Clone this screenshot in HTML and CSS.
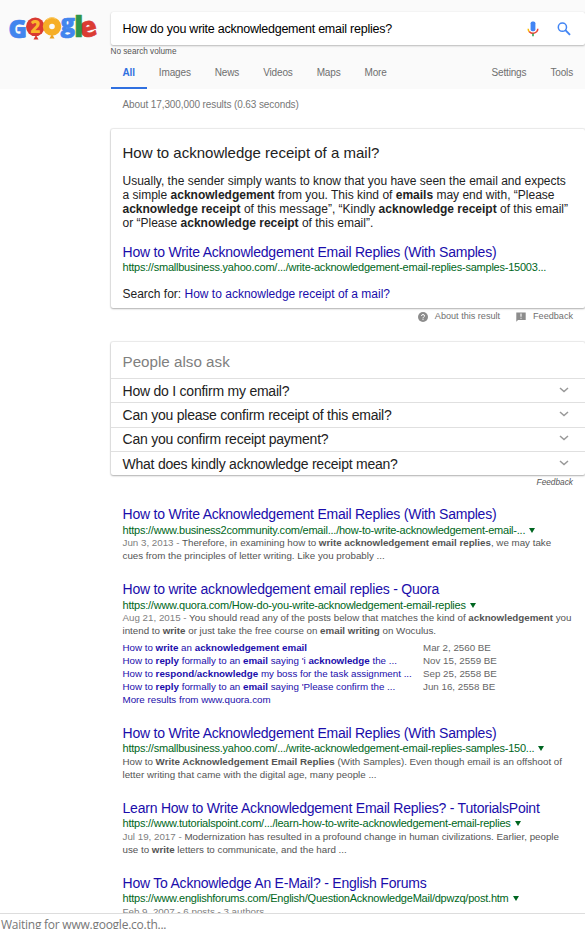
FILE: index.html
```html
<!DOCTYPE html>
<html lang="en">
<head>
    <meta charset="UTF-8">
    <meta name="viewport" content="width=device-width, initial-scale=1.0">
    <title>How do you write acknowledgement email replies? - Google Search</title>
    <link rel="stylesheet" href="styles.css">
</head>
<body>
    <div class="page">
        <header class="header">
            <a class="logo" href="#">
                <svg width="94" height="34" viewBox="0 -4 94 34" role="img" aria-label="Google">
                    <text class="letter blue" x="0.5" y="22.5" font-size="25">G</text>
                    <path d="M28 20l-2.5 4.5h5z" fill="#d93a31"/>
                    <circle cx="27.3" cy="11.8" r="9.3" fill="#d93a31"/>
                    <path d="M44 19l-2.5 4.5h5z" fill="#eca01c"/>
                    <circle cx="44" cy="11.5" r="6" fill="none" stroke="#f6ae26" stroke-width="6.4"/>
                    <path d="M39 4.5q5-3.5 9 -.5" fill="none" stroke="#fbd070" stroke-width="1"/>
                    <text class="digit" x="22.4" y="18" font-size="17">2</text>
                    <text class="letter blue" x="52.5" y="16.5" font-size="24">g</text>
                    <text class="letter red" x="72" y="22" font-size="28" transform="rotate(-15 80 15)">e</text>
                    <text class="letter green" x="66.3" y="22.3" font-size="28">l</text>
                </svg>
            </a>
            <div class="header-main">
                <div class="search-box">
                    <span class="query">How do you write acknowledgement email replies?</span>
                    <svg class="mic" width="12" height="16" viewBox="0 0 12 16">
                        <rect x="3.6" y="0.4" width="4.8" height="9.8" rx="1.8" fill="#4285f4"/>
                        <path d="M1.2 7.8q0 1.8 1.1 3" fill="none" stroke="#fbbc05" stroke-width="1.5"/>
                        <path d="M2.2 10.6Q6 14 9.6 10.8Q10.8 9.6 10.8 7.8" fill="none" stroke="#ea4335" stroke-width="1.5"/>
                        <path d="M6 12.6v2.6" stroke="#34a853" stroke-width="1.6"/>
                    </svg>
                    <svg class="lens" width="14" height="14" viewBox="0 0 14 14" fill="none" stroke="#4285f4">
                        <circle cx="5.4" cy="5.2" r="4.1" stroke-width="1.5"/>
                        <path d="M8.4 8.2L13 12.8" stroke-width="1.9"/>
                    </svg>
                </div>
                <div class="volume">No search volume</div>
                <nav class="tabs">
                    <a class="tab active" href="#">All</a>
                    <a class="tab" href="#">Images</a>
                    <a class="tab" href="#">News</a>
                    <a class="tab" href="#">Videos</a>
                    <a class="tab" href="#">Maps</a>
                    <a class="tab more" href="#">More</a>
                    <a class="tab" href="#">Settings</a>
                    <a class="tab" href="#">Tools</a>
                </nav>
            </div>
        </header>

        <main class="content">
            <div class="stats">About 17,300,000 results (0.63 seconds)</div>

            <section class="answer">
                <h2>How to acknowledge receipt of a mail?</h2>
                <p>Usually, the sender simply wants to know that you have seen the email and expects<br>
                a simple <b>acknowledgement</b> from you. This kind of <b>emails</b> may end with, “Please<br>
                <b>acknowledge receipt</b> of this message”, “Kindly <b>acknowledge receipt</b> of this email”<br>
                or “Please <b>acknowledge receipt</b> of this email”.</p>
                <a class="title" href="#">How to Write Acknowledgement Email Replies (With Samples)</a>
                <cite>https://smallbusiness.yahoo.com/.../write-acknowledgement-email-replies-samples-15003...</cite>
                <div class="search-for">Search for: <a href="#">How to acknowledge receipt of a mail?</a></div>
            </section>
            <div class="answer-footer">
                <svg width="10" height="10" viewBox="0 0 10 10">
                    <circle cx="5" cy="5" r="5" fill="#8c8c8c"/>
                    <path d="M3.5 4Q3.5 2.5 5 2.5T6.5 4Q6.5 4.6 5.7 5.1T5 6.4M5 7.1v1" fill="none" stroke="#fff" stroke-width="1"/>
                </svg>
                <span class="about">About this result</span>
                <svg width="10" height="10" viewBox="0 0 10 10">
                    <path d="M.3 .5h9.4v7.5H2L.3 9.7z" fill="#8c8c8c"/>
                    <path d="M5 1.6v3.2M5 5.7v1.1" stroke="#fff" stroke-width="1.1"/>
                </svg>
                <span class="about">Feedback</span>
            </div>

            <section class="ask">
                <h3>People also ask</h3>
                <div class="question">
                    <span>How do I confirm my email?</span>
                    <svg width="10" height="6" viewBox="0 0 10 6"><path d="M1 1l4 3.6L9 1"/></svg>
                </div>
                <div class="question">
                    <span>Can you please confirm receipt of this email?</span>
                    <svg width="10" height="6" viewBox="0 0 10 6"><path d="M1 1l4 3.6L9 1"/></svg>
                </div>
                <div class="question">
                    <span>Can you confirm receipt payment?</span>
                    <svg width="10" height="6" viewBox="0 0 10 6"><path d="M1 1l4 3.6L9 1"/></svg>
                </div>
                <div class="question">
                    <span>What does kindly acknowledge receipt mean?</span>
                    <svg width="10" height="6" viewBox="0 0 10 6"><path d="M1 1l4 3.6L9 1"/></svg>
                </div>
            </section>
            <div class="ask-feedback">Feedback</div>

            <div class="results">
                <article class="result">
                    <a class="title" href="#">How to Write Acknowledgement Email Replies (With Samples)</a>
                    <cite>https://www.business2community.com/email.../how-to-write-acknowledgement-email-...<i class="arrow"></i></cite>
                    <p><span class="date">Jun 3, 2013 - </span>Therefore, in examining how to <b>write acknowledgement email replies</b>, we may take<br>
                    cues from the principles of letter writing. Like you probably ...</p>
                </article>

                <article class="result">
                    <a class="title" href="#">How to write acknowledgement email replies - Quora</a>
                    <cite>https://www.quora.com/How-do-you-write-acknowledgement-email-replies<i class="arrow"></i></cite>
                    <p><span class="date">Aug 21, 2015 - </span>You should read any of the posts below that matches the kind of <b>acknowledgement</b> you<br>
                    intend to <b>write</b> or just take the free course on <b>email writing</b> on Woculus.</p>
                    <div class="sublinks">
                        <a href="#">How to <b>write</b> an <b>acknowledgement email</b></a><span>Mar 2, 2560 BE</span>
                        <a href="#">How to <b>reply</b> formally to an <b>email</b> saying 'i <b>acknowledge</b> the ...</a><span>Nov 15, 2559 BE</span>
                        <a href="#">How to <b>respond</b>/<b>acknowledge</b> my boss for the task assignment ...</a><span>Sep 25, 2558 BE</span>
                        <a href="#">How to <b>reply</b> formally to an <b>email</b> saying 'Please confirm the ...</a><span>Jun 16, 2558 BE</span>
                        <a href="#">More results from www.quora.com</a>
                    </div>
                </article>

                <article class="result">
                    <a class="title" href="#">How to Write Acknowledgement Email Replies (With Samples)</a>
                    <cite>https://smallbusiness.yahoo.com/.../write-acknowledgement-email-replies-samples-150...<i class="arrow"></i></cite>
                    <p>How to <b>Write Acknowledgement Email Replies</b> (With Samples). Even though email is an offshoot of<br>
                    letter writing that came with the digital age, many people ...</p>
                </article>

                <article class="result">
                    <a class="title" href="#">Learn How to Write Acknowledgement Email Replies? - TutorialsPoint</a>
                    <cite>https://www.tutorialspoint.com/.../learn-how-to-write-acknowledgement-email-replies<i class="arrow"></i></cite>
                    <p><span class="date">Jul 19, 2017 - </span>Modernization has resulted in a profound change in human civilizations. Earlier, people<br>
                    use to <b>write</b> letters to communicate, and the hard ...</p>
                </article>

                <article class="result">
                    <a class="title" href="#">How To Acknowledge An E-Mail? - English Forums</a>
                    <cite>https://www.englishforums.com/English/QuestionAcknowledgeMail/dpwzq/post.htm<i class="arrow"></i></cite>
                    <p><span class="date">Feb 9, 2007 - 6 posts - 3 authors</span></p>
                </article>
            </div>
        </main>
    </div>
    <div class="status-bar">Waiting for www.google.co.th...</div>
</body>
</html>
```

FILE: styles.css
```css
* {
    box-sizing: border-box;
}

body {
    margin: 0;
    height: 929px;
    display: flex;
    flex-direction: column;
    overflow: hidden;
    font-family: "Liberation Sans", Arial, sans-serif;
    background-color: #fff;
    color: #222;
}

a {
    color: #1a0dab;
    text-decoration: none;
}

h2, h3, p {
    margin: 0;
    font-weight: normal;
}

.page {
    height: 913px;
    flex: none;
    overflow: hidden;
}

/* Header */
.header {
    display: flex;
    height: 89px;
    background-color: #fafafa;
}

.logo {
    width: 111px;
    padding: 11px 0 0 8px;
}

.logo svg {
    overflow: visible;
}

.letter {
    font-family: "Open Sans", sans-serif;
    font-weight: 800;
    stroke-width: 0.7;
    stroke-linejoin: round;
}

.blue {
    fill: #4285ee;
    stroke: #4285ee;
}

.red {
    fill: #db3c33;
    stroke: #db3c33;
}

.green {
    fill: #30964a;
    stroke: #30964a;
}

.digit {
    font-family: "Open Sans", sans-serif;
    font-weight: 800;
    fill: #fbb62c;
}

.header-main {
    flex: 1;
    padding-top: 12px;
}

.search-box {
    display: flex;
    align-items: center;
    height: 33px;
    padding: 0 14px 0 11.5px;
    background-color: #fff;
    border-radius: 2px;
    box-shadow: 0 1px 2px rgba(0, 0, 0, 0.25), 0 0 1px rgba(0, 0, 0, 0.12);
}

.query {
    flex: 1;
    font-size: 12.5px;
    letter-spacing: -0.24px;
    color: #000;
}

.mic {
    margin-right: 18px;
}

.volume {
    height: 13px;
    margin-left: -0.5px;
    line-height: 13px;
    font-size: 8.2px;
    color: #555;
}

.tabs {
    display: flex;
    height: 31px;
}

.tab {
    padding: 0 12px;
    line-height: 29px;
    font-size: 10px;
    letter-spacing: -0.15px;
    color: #6f6f6f;
}

.tab.active {
    padding-left: 11.5px;
    font-weight: bold;
    color: #3070e0;
    border-bottom: 2px solid #3070e0;
}

.more {
    margin-right: auto;
}

/* Results column */
.content {
    padding-left: 111px;
}

.stats {
    height: 40px;
    padding-left: 11.5px;
    line-height: 32px;
    font-size: 10px;
    letter-spacing: -0.1px;
    color: #777;
}

.answer, .ask {
    border-radius: 2px;
    box-shadow: 0 1px 2px rgba(0, 0, 0, 0.25), 0 0 1px 1px rgba(0, 0, 0, 0.08);
}

.answer {
    height: 179px;
    padding: 14px 0 0 11.5px;
}

.answer h2 {
    line-height: 20px;
    font-size: 15px;
}

.answer p {
    margin: 11px 0 13px;
    line-height: 14px;
    font-size: 12px;
    white-space: nowrap;
}

.title {
    display: block;
    line-height: 18px;
    font-size: 14px;
    letter-spacing: -0.22px;
    white-space: nowrap;
}

cite {
    display: block;
    height: 13px;
    line-height: 13px;
    font-size: 11px;
    font-style: normal;
    letter-spacing: -0.23px;
    color: #006621;
    white-space: nowrap;
}

.search-for {
    margin-top: 12px;
    line-height: 16px;
    font-size: 12px;
}

.answer-footer {
    display: flex;
    align-items: center;
    height: 34px;
    padding: 0 12px 17px 0;
    justify-content: flex-end;
}

.about {
    margin: 0 0 2px 7px;
    font-size: 9.1px;
    color: #6f6f6f;
}

.about + svg {
    margin-left: 16px;
}

.ask {
    height: 133px;
}

.ask h3 {
    height: 36px;
    padding-left: 11.5px;
    line-height: 39px;
    font-size: 15.2px;
    color: #808080;
}

.question {
    display: flex;
    align-items: center;
    justify-content: space-between;
    height: 24.3px;
    padding: 0 16px 0 11.5px;
    border-top: 1px solid #e0e0e0;
    font-size: 14px;
    letter-spacing: -0.23px;
}

.question svg {
    margin-bottom: 2px;
}

.question path {
    fill: none;
    stroke: #999;
    stroke-width: 1.5;
}

.ask-feedback {
    height: 30px;
    padding-right: 12px;
    line-height: 14px;
    font-size: 8.3px;
    font-style: italic;
    color: #555;
    text-align: right;
}

/* Single results */
.results {
    padding-left: 11.5px;
}

.result {
    margin-bottom: 18px;
}

.result:nth-child(-n+2) cite {
    line-height: 15px;
}

.result p {
    line-height: 13px;
    font-size: 9.78px;
    color: #545454;
    white-space: nowrap;
}

.result .date {
    color: #808080;
}

.arrow {
    display: inline-block;
    margin-left: 4px;
    border: 3px solid transparent;
    border-top: 5px solid #006621;
    border-bottom: 0;
    vertical-align: 1px;
}

.sublinks {
    display: grid;
    grid-template-columns: 300.5px auto;
    margin-top: 4px;
    line-height: 13px;
    font-size: 9.78px;
    white-space: nowrap;
}

.sublinks span {
    color: #666;
}

.status-bar {
    height: 16px;
    padding-left: 1px;
    border-top: 1px solid #ddd;
    overflow: hidden;
    font-family: "Open Sans", sans-serif;
    font-size: 12px;
    letter-spacing: -0.25px;
    line-height: 22px;
    color: #777;
}
```
